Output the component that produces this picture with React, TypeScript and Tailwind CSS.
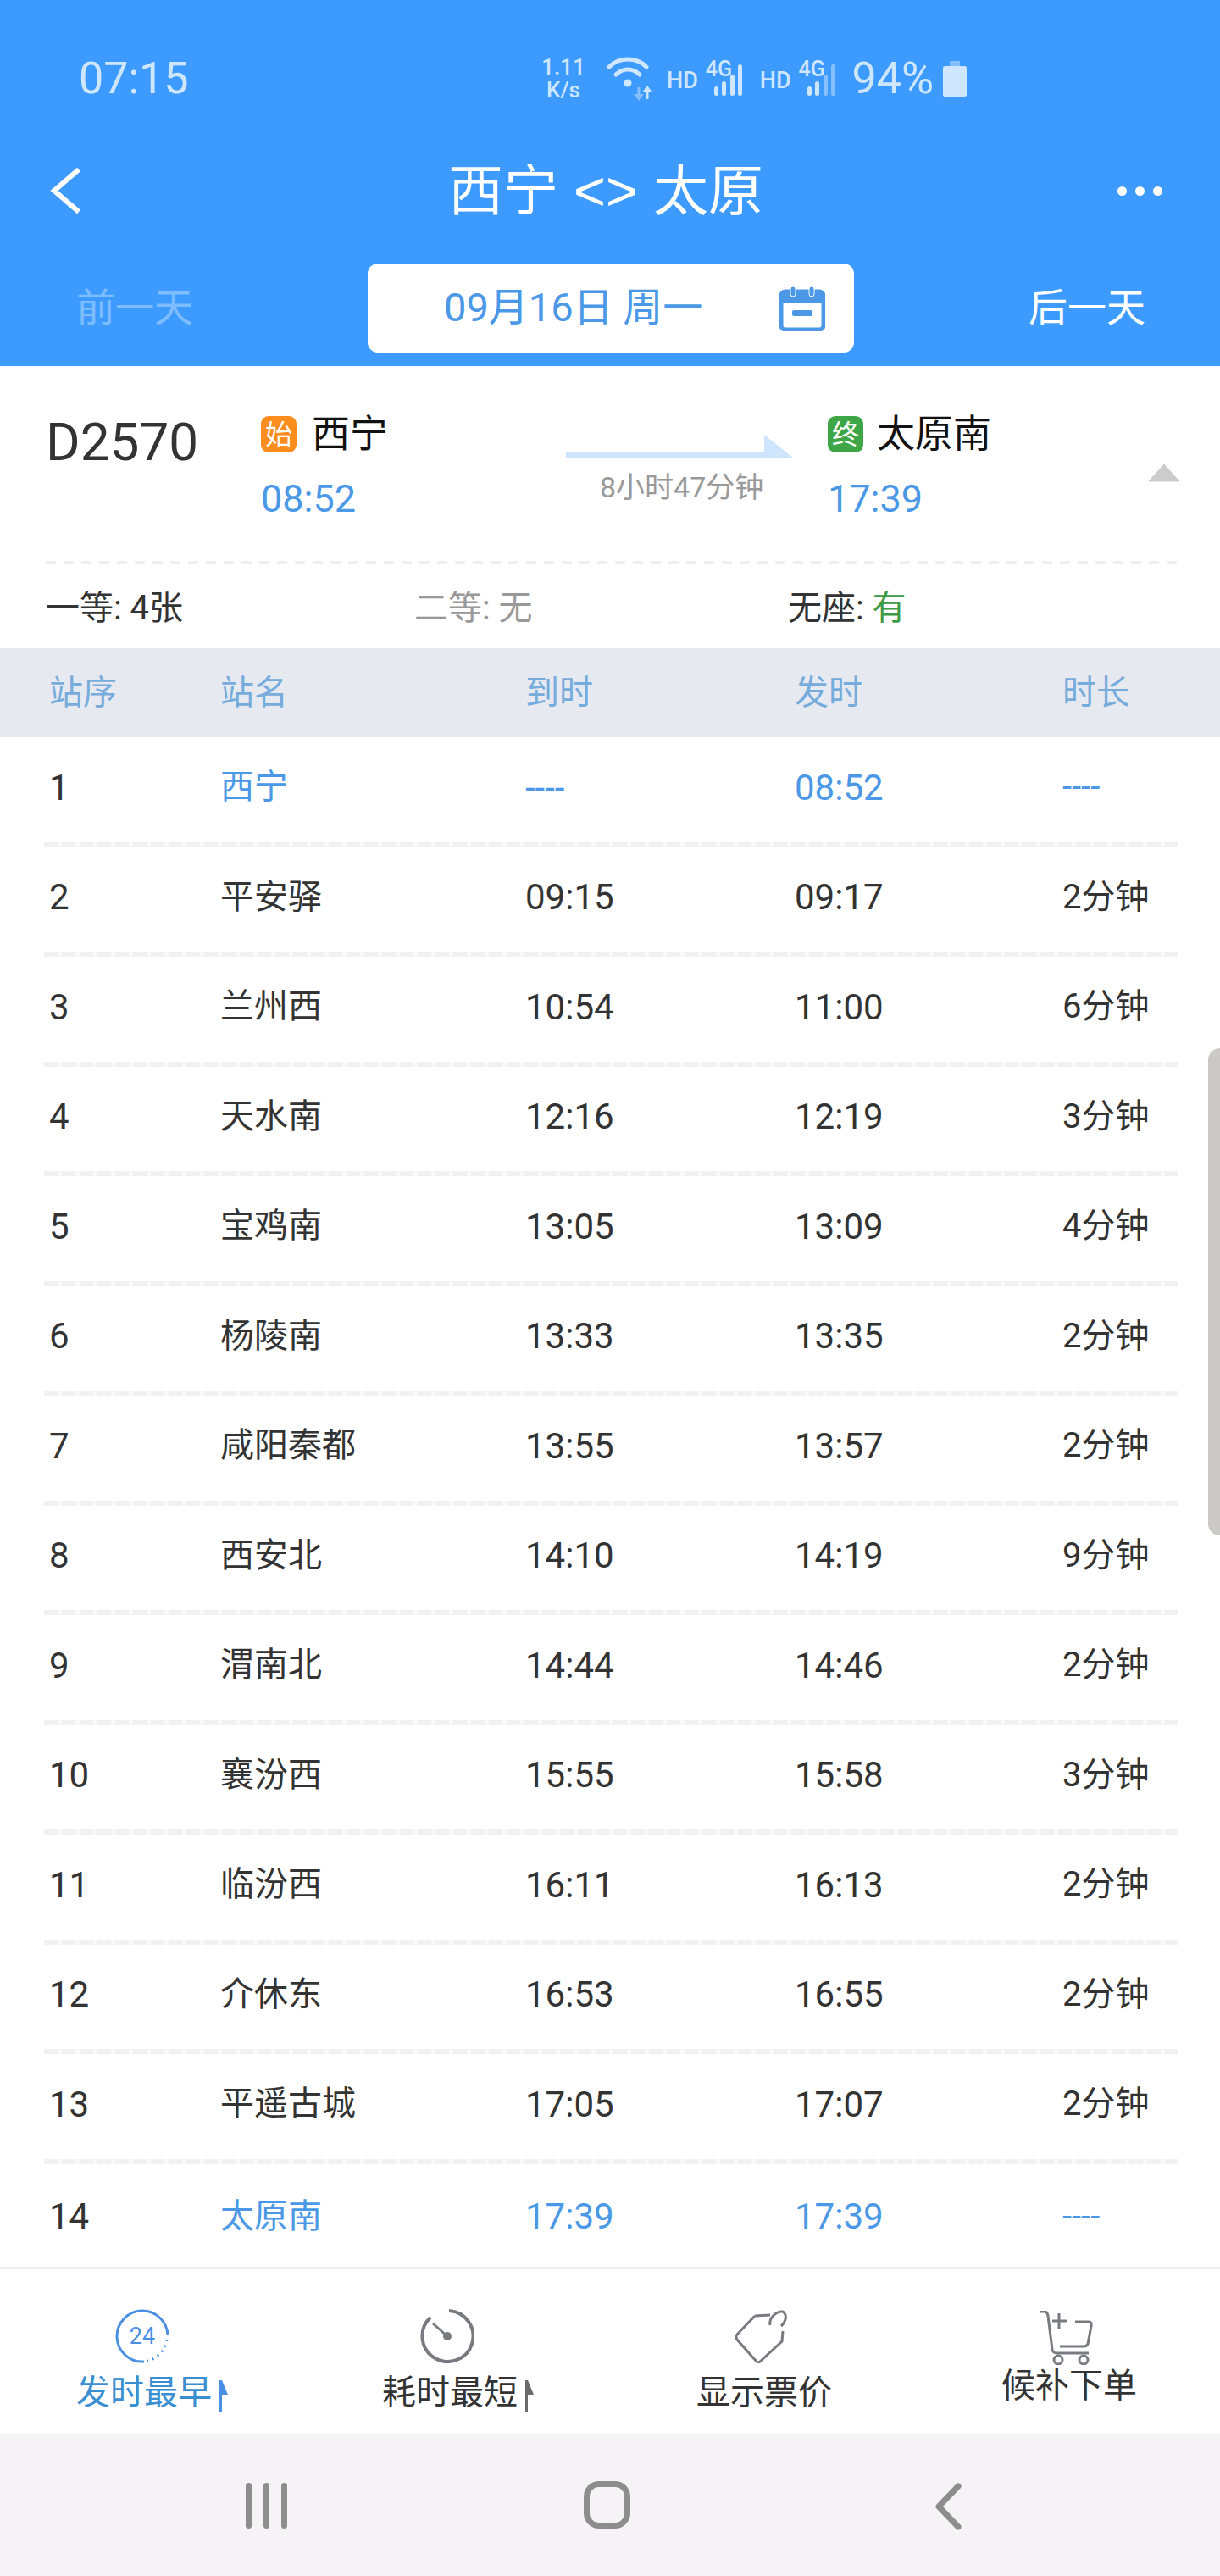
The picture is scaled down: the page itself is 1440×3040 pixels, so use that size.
const stops = [
  ["1", "西宁", "----", "08:52", "----"],
  ["2", "平安驿", "09:15", "09:17", "2分钟"],
  ["3", "兰州西", "10:54", "11:00", "6分钟"],
  ["4", "天水南", "12:16", "12:19", "3分钟"],
  ["5", "宝鸡南", "13:05", "13:09", "4分钟"],
  ["6", "杨陵南", "13:33", "13:35", "2分钟"],
  ["7", "咸阳秦都", "13:55", "13:57", "2分钟"],
  ["8", "西安北", "14:10", "14:19", "9分钟"],
  ["9", "渭南北", "14:44", "14:46", "2分钟"],
  ["10", "襄汾西", "15:55", "15:58", "3分钟"],
  ["11", "临汾西", "16:11", "16:13", "2分钟"],
  ["12", "介休东", "16:53", "16:55", "2分钟"],
  ["13", "平遥古城", "17:05", "17:07", "2分钟"],
  ["14", "太原南", "17:39", "17:39", "----"],
];

const font = "font-['Roboto','Noto_Sans_CJK_SC',sans-serif]";
const columns = "grid grid-cols-[202px_360px_318px_316px_1fr] items-center";

function Signal({ weak }: { weak?: boolean }) {
  return (
    <div className="relative w-[48px] h-[42px]">
      <span className="absolute left-0 top-[-1px] text-[25px] leading-[22px] font-medium">4G</span>
      <svg width="48" height="42" viewBox="0 0 48 42" className="absolute left-0 top-0">
        <rect x="10" y="30" width="5" height="11" rx="2.5" fill="#cfe6ff" />
        <rect x="19" y="24" width="5" height="17" rx="2.5" fill="#cfe6ff" />
        <rect x="29" y="16" width="5" height="25" rx="2.5" fill={weak ? "#86bfff" : "#cfe6ff"} />
        <rect x="38" y="4" width="5" height="37" rx="2.5" fill={weak ? "#86bfff" : "#cfe6ff"} />
      </svg>
    </div>
  );
}

function StatusBar() {
  return (
    <div className={`h-[184px] flex items-center pt-[2px] text-[#cfe6ff] ${font}`}>
      <span className="ml-[93px] w-[546px] text-[52px] leading-none">07:15</span>
      <div className="w-[52px] text-center text-[26px] leading-[27px] font-medium">
        <div>1.11</div>
        <div>K/s</div>
      </div>
      <svg width="52" height="56" viewBox="0 0 52 56" className="ml-[26px]">
        <path d="M2 14 C14 2 34 2 46 14" fill="none" stroke="#cfe6ff" strokeWidth="5" strokeLinecap="round" />
        <path d="M10 23 C18 15 30 15 38 23" fill="none" stroke="#cfe6ff" strokeWidth="5" strokeLinecap="round" />
        <circle cx="24" cy="33" r="4.5" fill="#cfe6ff" />
        <path d="M37 38v10" stroke="#86bfff" strokeWidth="3" />
        <path d="M31 46h12l-6 8z" fill="#86bfff" />
        <path d="M47 52V42" stroke="#cfe6ff" strokeWidth="3" />
        <path d="M41 44h12l-6-8z" fill="#cfe6ff" />
      </svg>
      <span className="ml-[18px] text-[27px] font-medium leading-none mt-[4px]">HD</span>
      <div className="ml-[9px]"><Signal /></div>
      <span className="ml-[16px] text-[27px] font-medium leading-none mt-[4px]">HD</span>
      <div className="ml-[9px]"><Signal weak /></div>
      <span className="ml-[15px] text-[52px] leading-none">94%</span>
      <svg width="28" height="42" viewBox="0 0 28 42" className="ml-[11px]">
        <rect x="8" y="0" width="12" height="6" rx="1" fill="#86bfff" />
        <rect x="0" y="6" width="28" height="36" rx="2.5" fill="#cfe6ff" />
      </svg>
    </div>
  );
}

function Header() {
  return (
    <header className={`h-[432px] bg-[#3d9bff] ${font}`}>
      <StatusBar />
      <div className="h-[82px] grid grid-cols-[1fr_auto_1fr] items-center pl-[58px] pr-[68px]">
        <svg width="38" height="56" viewBox="0 0 38 56">
          <path d="M35 3 L6 28 L35 53" fill="none" stroke="white" strokeWidth="6" />
        </svg>
        <h1 className="text-[65px] leading-none text-white font-['Liberation_Sans','Noto_Sans_CJK_SC',sans-serif]">西宁 &lt;&gt; 太原</h1>
        <div className="flex gap-[10px] justify-end">
          <span className="w-[11px] h-[11px] rounded-full bg-white" />
          <span className="w-[11px] h-[11px] rounded-full bg-white" />
          <span className="w-[11px] h-[11px] rounded-full bg-white" />
        </div>
      </div>
      <div className="mt-[45px] h-[105px] flex items-center text-[46px]">
        <span className="w-[434px] pl-[90px] text-[#7dbcff]">前一天</span>
        <div className="w-[574px] h-[105px] bg-white rounded-[12px] flex items-center text-[#4a98e6]">
          <span className="ml-[90px] w-[396px] whitespace-nowrap text-[47px]">09月16日 周一</span>
          <svg width="54" height="54" viewBox="0 0 54 54">
            <rect x="2" y="7" width="50" height="45" rx="5" fill="none" stroke="#4a98e6" strokeWidth="5" />
            <path d="M2 20h50v-8a5 5 0 0 0-5-5H7a5 5 0 0 0-5 5z" fill="#4a98e6" />
            <rect x="13" y="1" width="6" height="12" rx="3" fill="#4a98e6" stroke="white" strokeWidth="1" />
            <rect x="35" y="1" width="6" height="12" rx="3" fill="#4a98e6" stroke="white" strokeWidth="1" />
            <rect x="15" y="29" width="24" height="7" rx="2" fill="#4a98e6" />
          </svg>
        </div>
        <span className="pl-[206px] text-white">后一天</span>
      </div>
    </header>
  );
}

function Badge({ color, label }: { color: string; label: string }) {
  return (
    <span className={`w-[42px] h-[43px] rounded-[9px] flex items-center justify-center text-[32px] text-white ${color}`}>
      {label}
    </span>
  );
}

function TrainInfo() {
  return (
    <section className={`h-[333px] relative ${font}`}>
      <div className="h-[230px] flex ml-[54px] mr-[50px]">
        <div className="w-[254px] pt-[58px] text-[62px] leading-[64px] text-[#333333]">D2570</div>
        <div className="w-[360px] pt-[58px]">
          <div className="flex items-center h-[45px] text-[45px] text-[#111111]">
            <Badge color="bg-[#fb8c1e]" label="始" />
            <span className="ml-[18px]">西宁</span>
          </div>
          <div className="mt-[29px] text-[45px] leading-[50px] text-[#4a98e6]">08:52</div>
        </div>
        <div className="w-[309px] pt-[81px]">
          <svg width="268" height="28" viewBox="0 0 268 28" className="block">
            <path d="M0 20h234L234 0l34 27H0z" fill="#cfe5fd" />
          </svg>
          <div className="mt-[15px] ml-[40px] text-[34px] leading-[38px] text-[#999999] whitespace-nowrap">8小时47分钟</div>
        </div>
        <div className="pt-[58px]">
          <div className="flex items-center h-[45px] text-[45px] text-[#111111]">
            <Badge color="bg-[#3fa648]" label="终" />
            <span className="ml-[16px]">太原南</span>
          </div>
          <div className="mt-[29px] text-[45px] leading-[50px] text-[#4a98e6]">17:39</div>
        </div>
      </div>
      <div className="h-[4px] ml-[54px] mr-[50px] bg-[repeating-linear-gradient(90deg,#efefef_0,#efefef_12px,#ffffff_12px,#ffffff_21px)]" />
      <svg width="38" height="22" viewBox="0 0 38 22" className="absolute left-[1355px] top-[115px]">
        <path d="M19 1 L37 21 H1 Z" fill="#cccccc" stroke="#cccccc" strokeLinejoin="round" />
      </svg>
      <div className="flex h-[99px] items-center pt-[4px] pl-[54px] text-[40px] text-[#333333]">
        <span className="w-[435px]">一等: 4张</span>
        <span className="w-[441px] text-[#999999]">二等: 无</span>
        <span>无座: <span className="text-[#3e9b45]">有</span></span>
      </div>
    </section>
  );
}

function StopTable() {
  return (
    <main className={`flex-1 overflow-hidden ${font}`}>
      <div className={`${columns} pl-[58px] h-[105px] bg-[#e6e9f0] text-[40px] text-[#76acdc]`}>
        <span>站序</span>
        <span>站名</span>
        <span>到时</span>
        <span>发时</span>
        <span>时长</span>
      </div>
      {stops.map((stop, i) => {
        const first = i === 0;
        const last = i === stops.length - 1;
        const tint = first || last ? "text-[#4a98e6]" : "";
        return (
          <div key={stop[0]} className="h-[129.5px] ml-[52px] mr-[50px] flex flex-col">
            <div className={`${columns} pl-[6px] flex-1 pb-[5px] text-[40px] text-[#333333]`}>
              <span className="text-[42px]">{stop[0]}</span>
              <span className={tint}>{stop[1]}</span>
              <span className={`text-[42px] ${tint}`}>{stop[2]}</span>
              <span className={`text-[42px] ${tint}`}>{stop[3]}</span>
              <span className={tint}>{stop[4]}</span>
            </div>
            {!last && (
              <div className="h-[6px] bg-[repeating-linear-gradient(90deg,#f1f1f1_0,#f1f1f1_16px,#f9f9f9_16px,#f9f9f9_21px)]" />
            )}
          </div>
        );
      })}
    </main>
  );
}

function SortMark({ color }: { color: string }) {
  return (
    <svg width="12" height="38" viewBox="0 0 12 38" className="ml-[8px] mt-[8px]">
      <path d="M1 0h3l7 17H4v21H1z" fill={color} />
    </svg>
  );
}

function BottomBar() {
  return (
    <footer className={`h-[197px] border-t-[3px] border-[#eeeeee] bg-white flex text-[40px] text-[#333333] ${font}`}>
      <div className="w-[360px] pl-[90px] pt-[47px]">
        <svg width="64" height="64" viewBox="0 0 64 64" className="ml-[46px] block">
          <path d="M34 62 A30 30 0 1 1 62 31" fill="none" stroke="#4a90e2" strokeWidth="3" />
          <path d="M61 36 A30 30 0 0 1 38 61" fill="none" stroke="#4a90e2" strokeWidth="3" strokeDasharray="2 5" />
          <text x="32" y="41" textAnchor="middle" fontSize="27" fill="#4a90e2">24</text>
        </svg>
        <div className="flex leading-[45px] mt-[12px] text-[#3a8fd0]">
          <span className="whitespace-nowrap">发时最早</span>
          <SortMark color="#4a90e2" />
        </div>
      </div>
      <div className="w-[368px] pl-[91px] pt-[47px]">
        <svg width="64" height="64" viewBox="0 0 64 64" className="ml-[45px] block">
          <path d="M34 2 A30 30 0 1 1 12 10" fill="none" stroke="#777b80" strokeWidth="4" />
          <path d="M15 17 L32 32" fill="none" stroke="#777b80" strokeWidth="3" />
          <circle cx="32" cy="32" r="5" fill="#777b80" />
        </svg>
        <div className="flex leading-[45px] mt-[12px]">
          <span className="whitespace-nowrap">耗时最短</span>
          <SortMark color="#6b6b6b" />
        </div>
      </div>
      <div className="w-[360px] pl-[94px] pt-[47px]">
        <svg width="64" height="64" viewBox="0 0 64 64" className="ml-[45px] block">
          <path d="M24 8 L42 7 M57 26 L56 38 L30 62 Q28 64 26 62 L3 36 Q1 33 3 30 L24 8" fill="none" stroke="#777b80" strokeWidth="3" />
          <path d="M42 19 C40 10 50 2 57 3 C63 7 60 16 55 20" fill="none" stroke="#777b80" strokeWidth="3" />
        </svg>
        <div className="leading-[45px] mt-[12px] whitespace-nowrap">显示票价</div>
      </div>
      <div className="pl-[94px] pt-[49px]">
        <svg width="64" height="64" viewBox="0 0 64 64" className="ml-[45px] block">
          <path d="M1 1 H6 Q9 1 10 6 L15 46 Q16 50 20 50 H58" fill="none" stroke="#777b80" strokeWidth="3" />
          <path d="M23 3 V21 M15 12 H32 M42 13 H58 Q62 13 61 18 L57 39 Q56 42 52 42 H24" fill="none" stroke="#777b80" strokeWidth="3" />
          <circle cx="22" cy="58" r="5" fill="none" stroke="#777b80" strokeWidth="3" />
          <circle cx="52" cy="58" r="5" fill="none" stroke="#777b80" strokeWidth="3" />
        </svg>
        <div className="leading-[45px] mt-[2px] whitespace-nowrap">候补下单</div>
      </div>
    </footer>
  );
}

function NavBar() {
  return (
    <div className="h-[168px] bg-[#f6f3f6] flex items-start pt-[58px]">
      <div className="ml-[290px] w-[49px] h-[54px] flex justify-between">
        <span className="w-[7px] h-full rounded-full bg-[#8d8d8d]" />
        <span className="w-[7px] h-full rounded-full bg-[#8d8d8d]" />
        <span className="w-[7px] h-full rounded-full bg-[#8d8d8d]" />
      </div>
      <div className="ml-[350px] w-[55px] h-[56px] mt-[-2px] rounded-[18px] border-[7px] border-[#8d8d8d]" />
      <svg width="32" height="56" viewBox="0 0 32 56" className="ml-[359px]">
        <path d="M28 4 L5 28 L28 52" fill="none" stroke="#8d8d8d" strokeWidth="7" strokeLinecap="round" strokeLinejoin="round" />
      </svg>
    </div>
  );
}

export default function App() {
  return (
    <div className="relative w-[1440px] h-[3040px] bg-white flex flex-col overflow-hidden">
      <Header />
      <TrainInfo />
      <StopTable />
      <BottomBar />
      <NavBar />
      <div className="absolute left-[1426px] top-[1237px] w-[14px] h-[575px] rounded-l-[14px] bg-[#cbc9c5]" />
    </div>
  );
}
